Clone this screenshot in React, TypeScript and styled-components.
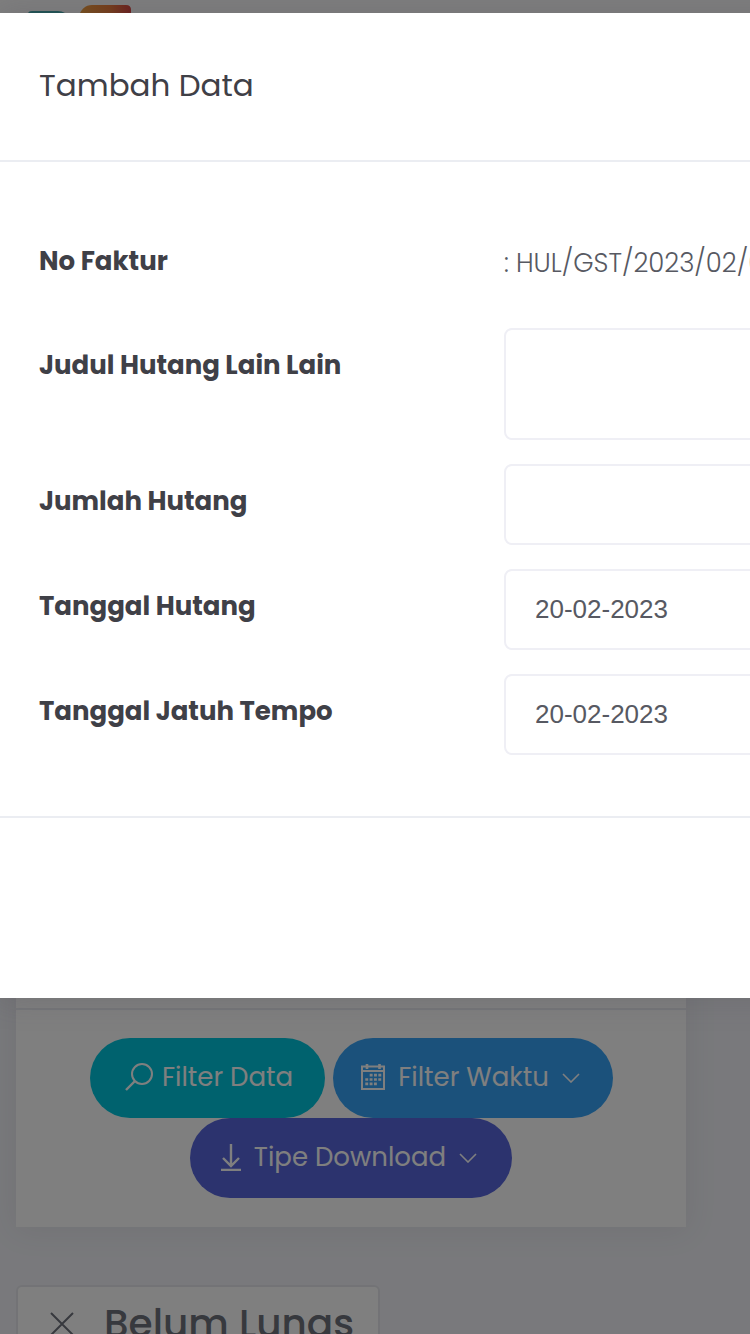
import React from "react";
import styled, { createGlobalStyle } from "styled-components";

const GlobalStyle = createGlobalStyle`
  * { box-sizing: border-box; }
  body {
    margin: 0;
    background: #f2f3f8;
    color: #575962;
    font-family: Poppins, Inter, sans-serif;
  }
  button, input, textarea { font: inherit; }
`;

const Page = styled.div`
  position: relative;
  height: 100vh;
  overflow: hidden;
  display: flex;
  flex-direction: column;
`;

const Header = styled.header`
  flex: none;
  height: 140px;
  padding: 4px 28px;
  background: #fff;
`;

const Main = styled.main`
  flex: none;
  display: flex;
  flex-direction: column;
  align-items: flex-start;
  gap: 58px;
  padding: 40px 64px 40px 16px;
`;

const Card = styled.section`
  width: 100%;
  background: #fff;
  box-shadow: 0 2px 30px 2px rgba(69, 65, 78, 0.08);
`;

const CardHead = styled.div`
  height: 830px;
  border-bottom: 2px solid #ebedf2;
`;

const Actions = styled.div`
  display: flex;
  flex-wrap: wrap;
  justify-content: center;
  column-gap: 8px;
  padding: 28px 64px 29px;
`;

const Pill = styled.button<{ $color: string; $width: number; $menu?: boolean }>`
  display: flex;
  align-items: center;
  justify-content: center;
  gap: ${(p) => (p.$menu ? 13 : 9)}px;
  width: ${(p) => p.$width}px;
  height: 80px;
  padding: ${(p) => (p.$menu ? "0 4px 2px 0" : "0 0 2px 4px")};
  border: 0;
  border-radius: 40px;
  background: ${(p) => p.$color};
  color: #fff;
  font-size: 26px;
  line-height: 40px;
  white-space: nowrap;
`;

const StatusButton = styled.button`
  display: flex;
  align-items: center;
  gap: 30px;
  width: 364px;
  height: 80px;
  padding: 0 0 2px 32px;
  border: 2px solid #e6e7ed;
  border-radius: 6px;
  background: #fff;
  color: #6f727d;
  font-size: 39px;
  font-weight: 500;
  line-height: 56px;
  white-space: nowrap;
`;

const Backdrop = styled.div`
  position: absolute;
  inset: 0;
  background: rgba(0, 0, 0, 0.5);
`;

const Modal = styled.form`
  position: absolute;
  top: 13px;
  left: 0;
  width: 192%;
  background: #fff;
  box-shadow: 0 0 30px 2px rgba(69, 65, 78, 0.2);
`;

const ModalHeader = styled.div`
  padding: 48px 39px 51px;
  border-bottom: 2px solid #ebedf2;
`;

const ModalTitle = styled.h5`
  margin: 0;
  color: #3f4047;
  font-size: 31px;
  font-weight: 400;
  line-height: 48px;
`;

const ModalBody = styled.div`
  display: flex;
  flex-direction: column;
  gap: 24px;
  padding: 62px 39px 61px;
`;

const ModalFooter = styled.div`
  height: 182px;
  border-top: 2px solid #ebedf2;
`;

const Row = styled.div`
  display: grid;
  grid-template-columns: 465px 1fr;
  align-items: start;
`;

const Label = styled.label`
  padding-top: 17px;
  color: #3f4047;
  font-size: 26px;
  font-weight: 700;
  line-height: 40px;
`;

const Value = styled.output`
  height: 80px;
  padding-top: 19px;
  font-size: 26px;
  font-weight: 300;
  line-height: 40px;
`;

const Field = styled.input`
  width: 100%;
  height: 81px;
  padding: 0 29px;
  border: 2px solid #efeff5;
  border-radius: 8px;
  background: #fff;
  color: #575962;
  font-family: "Liberation Sans", Arial, sans-serif;
  font-size: 26px;
  outline: 0;
`;

const Area = styled(Field).attrs({ as: "textarea" })`
  display: block;
  height: 112px;
  padding: 24px 29px;
  resize: none;
`;

const Stroke = styled.svg`
  flex: none;
  fill: none;
  stroke: currentColor;
  stroke-width: 2;
`;

const Logo = () => (
  <svg width="104" height="60" viewBox="0 0 104 60" aria-hidden="true">
    <defs>
      <linearGradient id="logoWarm">
        <stop offset="0" stopColor="#f2a23a" />
        <stop offset="0.6" stopColor="#ee7a35" />
        <stop offset="1" stopColor="#d8403c" />
      </linearGradient>
    </defs>
    <path d="M0 10Q0 7 4 7H30Q38 7 40 14V60H0Z" fill="#3fa7a8" />
    <path d="M50 14Q54 1 64 1H98Q103 1 103 6V60H50Z" fill="url(#logoWarm)" />
  </svg>
);

const SearchIcon = () => (
  <Stroke width="28" height="28" viewBox="0 0 28 28">
    <circle cx="17" cy="11" r="10" />
    <path d="M10 18L1 27" strokeWidth="2.4" />
  </Stroke>
);

const CalendarIcon = () => (
  <Stroke width="24" height="26" viewBox="0 0 24 26">
    <path d="M1 2.5H23V25H1ZM1 7H23" />
    <path d="M6 0V5M18.5 0V5" strokeWidth="2.6" />
    <path
      d="M8.7 11.2H20.3M4.3 15.5H20.3M4.3 19.8H16"
      strokeWidth="2.7"
      strokeDasharray="2.9 1.43"
    />
  </Stroke>
);

const DownloadIcon = () => (
  <Stroke width="20" height="28" viewBox="0 0 20 28">
    <path d="M10 1V23M2 15L10 23L18 15M0 27H20" strokeWidth="2.4" />
  </Stroke>
);

const ChevronIcon = () => (
  <Stroke width="18" height="12" viewBox="0 0 18 12">
    <path d="M1 3L9 11L17 3" strokeWidth="1.6" />
  </Stroke>
);

const CloseIcon = () => (
  <Stroke width="24" height="24" viewBox="0 0 24 24">
    <path d="M1 1L23 23M23 1L1 23" />
  </Stroke>
);

export default function App() {
  return (
    <>
      <GlobalStyle />
      <Page>
        <Header>
          <Logo />
        </Header>
        <Main>
          <Card>
            <CardHead />
            <Actions>
              <Pill type="button" $color="#00c5dc" $width={235}>
                <SearchIcon />
                Filter Data
              </Pill>
              <Pill type="button" $color="#36a3f7" $width={280} $menu>
                <CalendarIcon />
                Filter Waktu
                <ChevronIcon />
              </Pill>
              <Pill type="button" $color="#5867dd" $width={322} $menu>
                <DownloadIcon />
                Tipe Download
                <ChevronIcon />
              </Pill>
            </Actions>
          </Card>
          <StatusButton type="button">
            <CloseIcon />
            Belum Lunas
          </StatusButton>
        </Main>
        <Backdrop />
        <Modal role="dialog" aria-labelledby="modal-title">
          <ModalHeader>
            <ModalTitle id="modal-title">Tambah Data</ModalTitle>
          </ModalHeader>
          <ModalBody>
            <Row>
              <Label htmlFor="faktur">No Faktur</Label>
              <Value id="faktur">: HUL/GST/2023/02/0</Value>
            </Row>
            <Row>
              <Label htmlFor="judul">Judul Hutang Lain Lain</Label>
              <Area id="judul" />
            </Row>
            <Row>
              <Label htmlFor="jumlah">Jumlah Hutang</Label>
              <Field id="jumlah" type="text" />
            </Row>
            <Row>
              <Label htmlFor="tanggal">Tanggal Hutang</Label>
              <Field id="tanggal" type="text" defaultValue="20-02-2023" />
            </Row>
            <Row>
              <Label htmlFor="tempo">Tanggal Jatuh Tempo</Label>
              <Field id="tempo" type="text" defaultValue="20-02-2023" />
            </Row>
          </ModalBody>
          <ModalFooter />
        </Modal>
      </Page>
    </>
  );
}
